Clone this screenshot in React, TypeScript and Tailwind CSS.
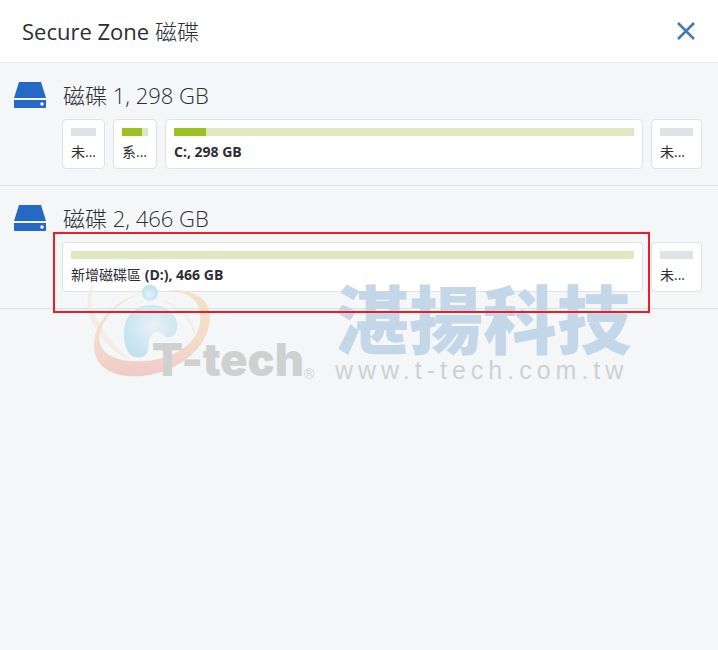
import React from 'react';

type Volume = {
    id: string;
    name: string;
    size?: string;
    used: number;
    allocated: boolean;
    width: string;
    highlighted?: boolean;
};

type Disk = {
    id: number;
    size: string;
    volumes: Volume[];
};

const disks: Disk[] = [
    {
        id: 1,
        size: '298 GB',
        volumes: [
            { id: '1-a', name: '未...', used: 0, allocated: false, width: 'w-[43px] shrink-0' },
            { id: '1-b', name: '系...', used: 78, allocated: true, width: 'w-11 shrink-0' },
            { id: '1-c', name: '', size: 'C:, 298 GB', used: 7, allocated: true, width: 'min-w-0 flex-1' },
            { id: '1-d', name: '未...', used: 0, allocated: false, width: 'w-[51px] shrink-0' },
        ],
    },
    {
        id: 2,
        size: '466 GB',
        volumes: [
            { id: '2-a', name: '新增磁碟區', size: ' (D:), 466 GB', used: 0, allocated: true, width: 'min-w-0 flex-1', highlighted: true },
            { id: '2-b', name: '未...', used: 0, allocated: false, width: 'w-[51px] shrink-0' },
        ],
    },
];

const DriveIcon: React.FC = () => (
    <svg width="32" height="26" viewBox="0 0 32 26" className="shrink-0" aria-hidden="true">
        <path d="M5 0h22l5 16H0z" fill="#2668c5" />
        <path d="M0 18h32v7.2a.8.8 0 0 1-.8.8H.8a.8.8 0 0 1-.8-.8z" fill="#2668c5" />
        <circle cx="28" cy="22" r="1.7" fill="#fff" />
    </svg>
);

const VolumeCard: React.FC<{ volume: Volume }> = ({ volume }) => (
    <div className={`relative ${volume.width}`}>
        <button type="button" className="block w-full rounded border border-[#dfe3e6] bg-white p-2 text-left">
            <span className={`block h-2 ${volume.allocated ? 'bg-[#dee9c1]' : 'bg-[#dfe3e6]'}`}>
                <span className="block h-2 bg-[#9ac223]" style={{ width: `${volume.used}%` }} />
            </span>
            <span className="mt-2 block text-sm leading-4 font-bold whitespace-pre text-[#2b2f36]">
                <span className="font-normal">{volume.name}</span>
                {volume.size}
            </span>
        </button>
        {volume.highlighted && (
            <div className="pointer-events-none absolute -top-[10px] -right-[7px] -bottom-[21px] -left-[9px] z-20 border-2 border-[#ed1c24]" />
        )}
    </div>
);

const DiskSection: React.FC<{ disk: Disk }> = ({ disk }) => (
    <section className="border-b border-[#dde2e6] pt-4 pr-4 pb-4 pl-[14px]">
        <div className="flex h-8 items-center gap-[17px]">
            <DriveIcon />
            <h2 className="text-[22px] leading-8 font-light text-[#2b2f36]">
                磁碟 {disk.id}, {disk.size}
            </h2>
        </div>
        <div className="mt-2 ml-12 flex gap-2">
            {disk.volumes.map((volume) => (
                <VolumeCard key={volume.id} volume={volume} />
            ))}
        </div>
    </section>
);

const Emblem: React.FC = () => (
    <svg width="133" height="120" viewBox="0 0 400 360" aria-hidden="true">
        <defs>
            <linearGradient id="ring" x1="0" y1="0" x2="0" y2="1">
                <stop offset="0" stopColor="#f2e2c8" />
                <stop offset="0.6" stopColor="#f3dccb" />
                <stop offset="1" stopColor="#efcaca" />
            </linearGradient>
            <radialGradient id="drop" cx="0.55" cy="0.4" r="0.6">
                <stop offset="0" stopColor="#e9f1f7" />
                <stop offset="1" stopColor="#c3e2ef" />
            </radialGradient>
            <radialGradient id="ball" cx="0.45" cy="0.6" r="0.6">
                <stop offset="0" stopColor="#e6f2f8" />
                <stop offset="1" stopColor="#bcdeed" />
            </radialGradient>
        </defs>
        <path d="M45 38C15 65 17 118 40 165c25 50 70 90 115 107C100 225 45 160 35 100c-3-25 1-45 10-62z" fill="#f5ece8" />
        <path d="M250 92c45 15 82 50 95 98" fill="none" stroke="#f4ebe4" strokeWidth="5" />
        <path
            d="M185 69C95 95 42 165 42 225c0 65 53 95 123 94 115-1 226-79 226-179 0-55-51-85-133-80 52 2 104 20 104 85 0 80-92 130-187 129-75-1-117-24-117-74 2-45 52-105 127-131z"
            fill="url(#ring)"
        />
        <path
            d="M132 190c0-50 33-85 83-85 45 0 77 30 77 60 0 25-12 38-27 37-17-2-20-17-33-17-17 2-25 20-26 45-2 25-16 34-34 33-27-1-40-33-40-73z"
            fill="url(#drop)"
        />
        <circle cx="210" cy="68" r="24" fill="url(#ball)" />
    </svg>
);

const Watermark: React.FC = () => (
    <div className="pointer-events-none absolute top-[270px] left-20 z-10 flex">
        <div className="relative w-[255px]">
            <Emblem />
            <div className="absolute top-[62px] left-[72px] flex items-end text-[#cfd1d1]">
                <span className="font-['Inter',sans-serif] text-[45px] leading-[56px] font-black">T-tech</span>
                <span className="font-['Liberation_Sans',sans-serif] text-sm leading-7">®</span>
            </div>
        </div>
        <div className="whitespace-nowrap">
            <p className="font-['Noto_Sans_CJK_TC',sans-serif] text-[74px] leading-[92px] font-black text-[#c4d7e8]">湛揚科技</p>
            <p className="font-['Liberation_Sans',sans-serif] text-[25px] leading-4 tracking-[5px] text-[#cfd1d1]">www.t-tech.com.tw</p>
        </div>
    </div>
);

export default function App() {
    return (
        <div className="relative min-h-screen overflow-hidden bg-[#f4f6f8] font-['Open_Sans','Noto_Sans_CJK_TC',sans-serif]">
            <header className="flex items-center justify-between border-b border-[#e1e7ed] bg-white py-[15px] pr-[23px] pl-[22px]">
                <h1 className="text-[22px] leading-8 text-[#2b2f36]">
                    Secure Zone <span className="font-light">磁碟</span>
                </h1>
                <button type="button" aria-label="Close">
                    <svg width="18" height="18" viewBox="0 0 18 18" fill="none" stroke="#4576b5" strokeWidth="2.5" aria-hidden="true">
                        <path d="M1 1l16 16M17 1L1 17" />
                    </svg>
                </button>
            </header>
            <main>
                {disks.map((disk) => (
                    <DiskSection key={disk.id} disk={disk} />
                ))}
            </main>
            <Watermark />
        </div>
    );
}
